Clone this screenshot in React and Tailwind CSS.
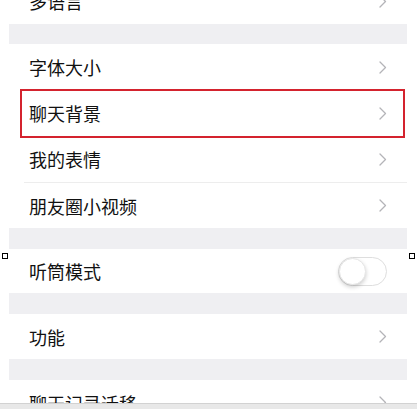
import React from 'react';

const font = { fontFamily: '"Noto Sans CJK SC", "Noto Sans", sans-serif' };

function Chevron() {
  return (
    <svg width="8" height="13" viewBox="0 0 8 13" fill="none" className="shrink-0">
      <path d="M1 1l5.5 5.5L1 12" stroke="#b4b4b8" strokeWidth="1.3" strokeLinecap="round" strokeLinejoin="round" />
    </svg>
  );
}

function Row({ label, h = 'h-[46px]', children }) {
  return (
    <div className={`flex items-center justify-between pl-[20px] pr-[20px] bg-white ${h}`}>
      <span className="text-[18px] text-[#111111] leading-none">{label}</span>
      {children || <Chevron />}
    </div>
  );
}

function Gap({ h = 'h-[20px]' }) {
  return <div className={`bg-[#efeff2] ${h}`} />;
}

function Toggle() {
  return (
    <div className="relative w-[49px] h-[29px] rounded-full border border-[#dedede] bg-white">
      <div className="absolute left-0 top-0 w-[27px] h-[27px] rounded-full bg-white shadow-[0_2px_4px_rgba(0,0,0,0.2)] border border-[#e6e6e6]" />
    </div>
  );
}

export default function App() {
  return (
    <div className="relative w-[417px] h-[409px] overflow-hidden bg-white" style={font}>
      <div className="ml-[9px] w-[398px] -mt-[22px]">
        <Row label="多语言" />
        <Gap />
        <Row label="字体大小" />
        <Row label="聊天背景" />
        <Row label="我的表情" />
        <div className="ml-[15px] h-px bg-[#ededed]" />
        <Row label="朋友圈小视频" h="h-[45px]" />
        <Gap h="h-[21px]" />
        <Row label="听筒模式" h="h-[44px]">
          <Toggle />
        </Row>
        <Gap h="h-[21px]" />
        <Row label="功能" h="h-[45px]" />
        <Gap h="h-[21px]" />
        <Row label="聊天记录迁移" h="h-[45px]" />
      </div>

      {/* highlight frame */}
      <div className="absolute left-[20px] top-[89px] w-[385px] h-[49px] border-2 border-[#d4232e]" />

      {/* selection handles */}
      <div className="absolute left-[2px] top-[253px] w-[6px] h-[6px] border border-black bg-white" />
      <div className="absolute left-[409px] top-[253px] w-[6px] h-[6px] border border-black bg-white" />

      {/* bottom bar */}
      <div className="absolute left-0 bottom-0 w-full h-[6px] bg-[#e8e8e8] border-t border-[#d2d2d2]" />
    </div>
  );
}
